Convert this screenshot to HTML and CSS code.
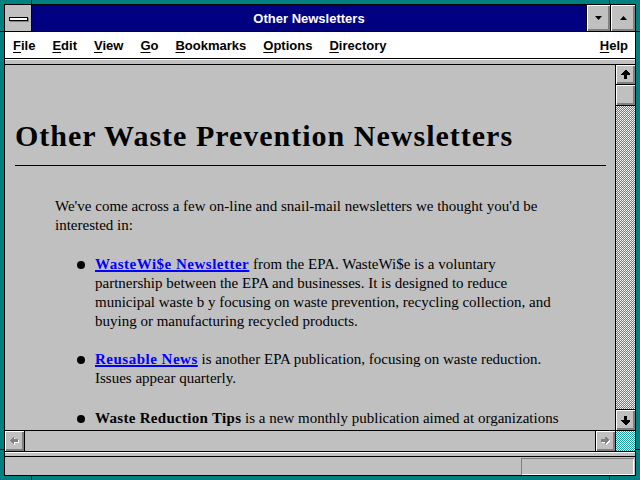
FILE: index.html
```html
<!DOCTYPE html>
<html>
<head>
<meta charset="utf-8">
<title>Other Newsletters</title>
<link rel="stylesheet" href="styles.css">
</head>
<body>
<div class="window">
  <span class="tick tick-top-l"></span>
  <span class="tick tick-top-r"></span>
  <span class="tick tick-bot-l"></span>
  <span class="tick tick-bot-r"></span>
  <span class="tick tick-left-t"></span>
  <span class="tick tick-left-b"></span>
  <span class="tick tick-right-t"></span>
  <span class="tick tick-right-b"></span>
  <div class="frame">
    <div class="titlebar">
      <div class="sysmenu"><div class="sysbar"></div></div>
      <div class="title">Other Newsletters</div>
      <div class="tbtn tbtn-min">
        <svg width="7" height="4" viewBox="0 0 7 4"><polygon points="0,0 7,0 3.5,4" fill="#000"/></svg>
      </div>
      <div class="tbtn tbtn-max">
        <svg width="7" height="4" viewBox="0 0 7 4"><polygon points="0,4 7,4 3.5,0" fill="#000"/></svg>
      </div>
    </div>
    <div class="menubar">
      <span class="mi"><u>F</u>ile</span>
      <span class="mi"><u>E</u>dit</span>
      <span class="mi"><u>V</u>iew</span>
      <span class="mi"><u>G</u>o</span>
      <span class="mi"><u>B</u>ookmarks</span>
      <span class="mi"><u>O</u>ptions</span>
      <span class="mi"><u>D</u>irectory</span>
      <span class="mi mi-help"><u>H</u>elp</span>
    </div>
    <div class="strip"></div>
    <div class="main">
      <div class="content">
        <h1 class="heading">Other Waste Prevention Newsletters</h1>
        <hr class="rule">
        <div class="body">
          <p class="intro">We've come across a few on-line and snail-mail newsletters we thought you'd be<br>interested in:</p>
          <ul class="list">
            <li><a class="link" href="#">WasteWi$e Newsletter</a> from the EPA. WasteWi$e is a voluntary<br>partnership between the EPA and businesses. It is designed to reduce<br>municipal waste b y focusing on waste prevention, recycling collection, and<br>buying or manufacturing recycled products.</li>
            <li><a class="link" href="#">Reusable News</a> is another EPA publication, focusing on waste reduction.<br>Issues appear quarterly.</li>
            <li class="item-last"><b class="strong">Waste Reduction Tips</b> is a new monthly publication aimed at organizations</li>
          </ul>
        </div>
      </div>
      <div class="vscroll">
        <div class="sbtn sbtn-up">
          <svg width="9" height="9" viewBox="0 0 9 9" shape-rendering="crispEdges"><polygon points="4,0 5,0 9,4 9,5 6,5 6,9 3,9 3,5 0,5 0,4" fill="#000"/></svg>
        </div>
        <div class="thumb"></div>
        <div class="track"></div>
        <div class="sbtn sbtn-down">
          <svg width="9" height="9" viewBox="0 0 9 9" shape-rendering="crispEdges"><polygon points="3,0 6,0 6,4 9,4 9,5 5,9 4,9 0,5 0,4 3,4" fill="#000"/></svg>
        </div>
      </div>
    </div>
    <div class="hrow">
      <div class="hscroll">
        <div class="hbtn hbtn-left">
          <svg width="9" height="8" viewBox="0 0 9 8" shape-rendering="crispEdges">
            <polygon points="1,4 4,1 5,1 5,3 9,3 9,6 5,6 5,8 4,8" fill="#fff"/>
            <polygon points="0,3 3,0 4,0 4,2 8,2 8,5 4,5 4,7 3,7" fill="#808080"/>
          </svg>
        </div>
        <div class="htrack"></div>
        <div class="hbtn hbtn-right">
          <svg width="9" height="8" viewBox="0 0 9 8" shape-rendering="crispEdges">
            <polygon points="1,3 5,3 5,1 6,1 9,4 6,8 5,8 5,6 1,6" fill="#fff"/>
            <polygon points="0,2 4,2 4,0 5,0 8,3 5,7 4,7 4,5 0,5" fill="#808080"/>
          </svg>
        </div>
      </div>
      <div class="corner"></div>
    </div>
    <div class="strip2"></div>
    <div class="status"><div class="statbox"></div></div>
  </div>
</div>
</body>
</html>
```
FILE: styles.css
```css
html, body {
  margin: 0;
  padding: 0;
  background: #008080;
}
.window {
  position: relative;
  width: 640px;
  height: 480px;
  box-sizing: border-box;
  border: 4px solid #008080;
  background: #008080;
}
.tick {
  position: absolute;
  background: #000;
}
.tick-top-l, .tick-top-r, .tick-bot-l, .tick-bot-r { width: 1px; height: 4px; }
.tick-top-l { top: -4px; left: 27px; }
.tick-top-r { top: -4px; left: 605px; }
.tick-bot-l { bottom: -4px; left: 27px; }
.tick-bot-r { bottom: -4px; left: 605px; }
.tick-left-t, .tick-left-b, .tick-right-t, .tick-right-b { width: 4px; height: 1px; }
.tick-left-t { left: -4px; top: 27px; }
.tick-left-b { left: -4px; top: 445px; }
.tick-right-t { right: -4px; top: 27px; }
.tick-right-b { right: -4px; top: 445px; }

.frame {
  height: 100%;
  box-sizing: border-box;
  border: 1px solid #000;
  display: flex;
  flex-direction: column;
  background: #c0c0c0;
}

/* title bar */
.titlebar {
  height: 26px;
  border-bottom: 1px solid #000;
  display: flex;
  flex: none;
}
.sysmenu {
  width: 26px;
  border-right: 1px solid #000;
  background: #c0c0c0;
  display: flex;
  align-items: center;
  justify-content: center;
}
.sysbar {
  width: 17px;
  height: 2px;
  background: #fff;
  border: 1px solid #000;
  box-shadow: 1px 1px 0 #808080;
  margin-top: 1px;
}
.title {
  flex: 1;
  background: #000080;
  color: #fff;
  font: bold 13px "Liberation Sans", Arial, sans-serif;
  display: flex;
  align-items: center;
  justify-content: center;
}
.tbtn {
  border-left: 1px solid #000;
  background: #c0c0c0;
  box-shadow: inset 1px 1px 0 #fff, inset -1px -1px 0 #808080, inset -2px -2px 0 #808080;
  display: flex;
  align-items: center;
  justify-content: center;
}
.tbtn svg { display: block; }
.tbtn-min { width: 23px; }
.tbtn-max { width: 24px; }

/* menu bar */
.menubar {
  height: 26px;
  flex: none;
  background: #fff;
  border-bottom: 1px solid #000;
  display: flex;
  align-items: center;
  gap: 17px;
  padding: 0 7px 0 8px;
  font: bold 13px "Liberation Sans", Arial, sans-serif;
  color: #000;
}
.mi u { text-decoration-thickness: 1px; text-underline-offset: 2px; }
.mi-help { margin-left: auto; }

.strip {
  height: 4px;
  flex: none;
  border-top: 1px solid #fff;
  border-bottom: 1px solid #000;
  background: #c0c0c0;
}

/* main area */
.main {
  height: 365px;
  flex: none;
  display: flex;
}
.content {
  flex: 1;
  overflow: hidden;
  background: #c0c0c0;
  padding: 0 9px 0 10px;
  font-family: "Liberation Serif", "Times New Roman", serif;
  color: #000;
}
.heading {
  margin: 55px 0 0 0;
  font-size: 30px;
  line-height: 32px;
  letter-spacing: 1px;
  font-weight: bold;
  white-space: nowrap;
}
.rule {
  margin: 13px 0 0 0;
  border: 0;
  height: 1px;
  background: #000;
}
.body {
  padding-left: 40px;
  font-size: 15px;
  line-height: 19px;
  white-space: nowrap;
}
.intro {
  margin: 31px 0 0 0;
}
.list {
  margin: 20px 0 0 0;
  padding-left: 40px;
  list-style: none;
}
.list li {
  position: relative;
  margin-bottom: 19px;
}
.list .item-last {
  margin-top: 21px;
}
.list li::before {
  content: "";
  position: absolute;
  left: -18px;
  top: 6px;
  width: 8px;
  height: 8px;
  border-radius: 50%;
  background: #000;
}
.link {
  color: #0000ff;
  font-weight: bold;
  letter-spacing: 0.5px;
  text-decoration: underline;
  text-decoration-thickness: 2px;
}
.strong {
  font-weight: bold;
  letter-spacing: 0.3px;
}

/* scrollbars */
.vscroll {
  width: 19px;
  border-left: 1px solid #000;
  display: flex;
  flex-direction: column;
}
.sbtn, .thumb, .hbtn {
  background: #c0c0c0;
  box-shadow: inset 1px 1px 0 #fff, inset -1px -1px 0 #808080, inset -2px -2px 0 #808080;
  display: flex;
  align-items: center;
  justify-content: center;
  flex: none;
}
.sbtn svg, .hbtn svg { display: block; }
.sbtn-up {
  height: 19px;
  border-bottom: 1px solid #000;
}
.thumb {
  height: 20px;
  border-bottom: 1px solid #000;
}
.track, .corner {
  background-color: #c0c0c0;
  background-image: repeating-conic-gradient(#20a0a0 0 25%, #ffffff 0 50%);
  background-size: 2px 2px;
}
.track { flex: 1; }
.sbtn-down {
  height: 20px;
  border-top: 1px solid #000;
}
.hrow {
  height: 20px;
  flex: none;
  border-top: 1px solid #000;
  display: flex;
}
.hscroll {
  flex: 1;
  display: flex;
}
.hbtn { width: 19px; }
.hbtn-left { border-right: 1px solid #000; }
.hbtn-right { border-left: 1px solid #000; }
.htrack { flex: 1; background: #c0c0c0; }
.corner {
  width: 19px;
  border-left: 1px solid #000;
}

.strip2 {
  height: 4px;
  flex: none;
  border-top: 1px solid #000;
  border-bottom: 1px solid #000;
  box-shadow: inset 0 1px 0 #fff;
  background: #c0c0c0;
}
.status {
  height: 18px;
  flex: none;
  background: #c0c0c0;
  display: flex;
  justify-content: flex-end;
}
.statbox {
  width: 113px;
  height: 17px;
  margin: 1px 1px 0 0;
  box-shadow: inset 1px 1px 0 #808080, inset -1px -1px 0 #fff;
}
```
